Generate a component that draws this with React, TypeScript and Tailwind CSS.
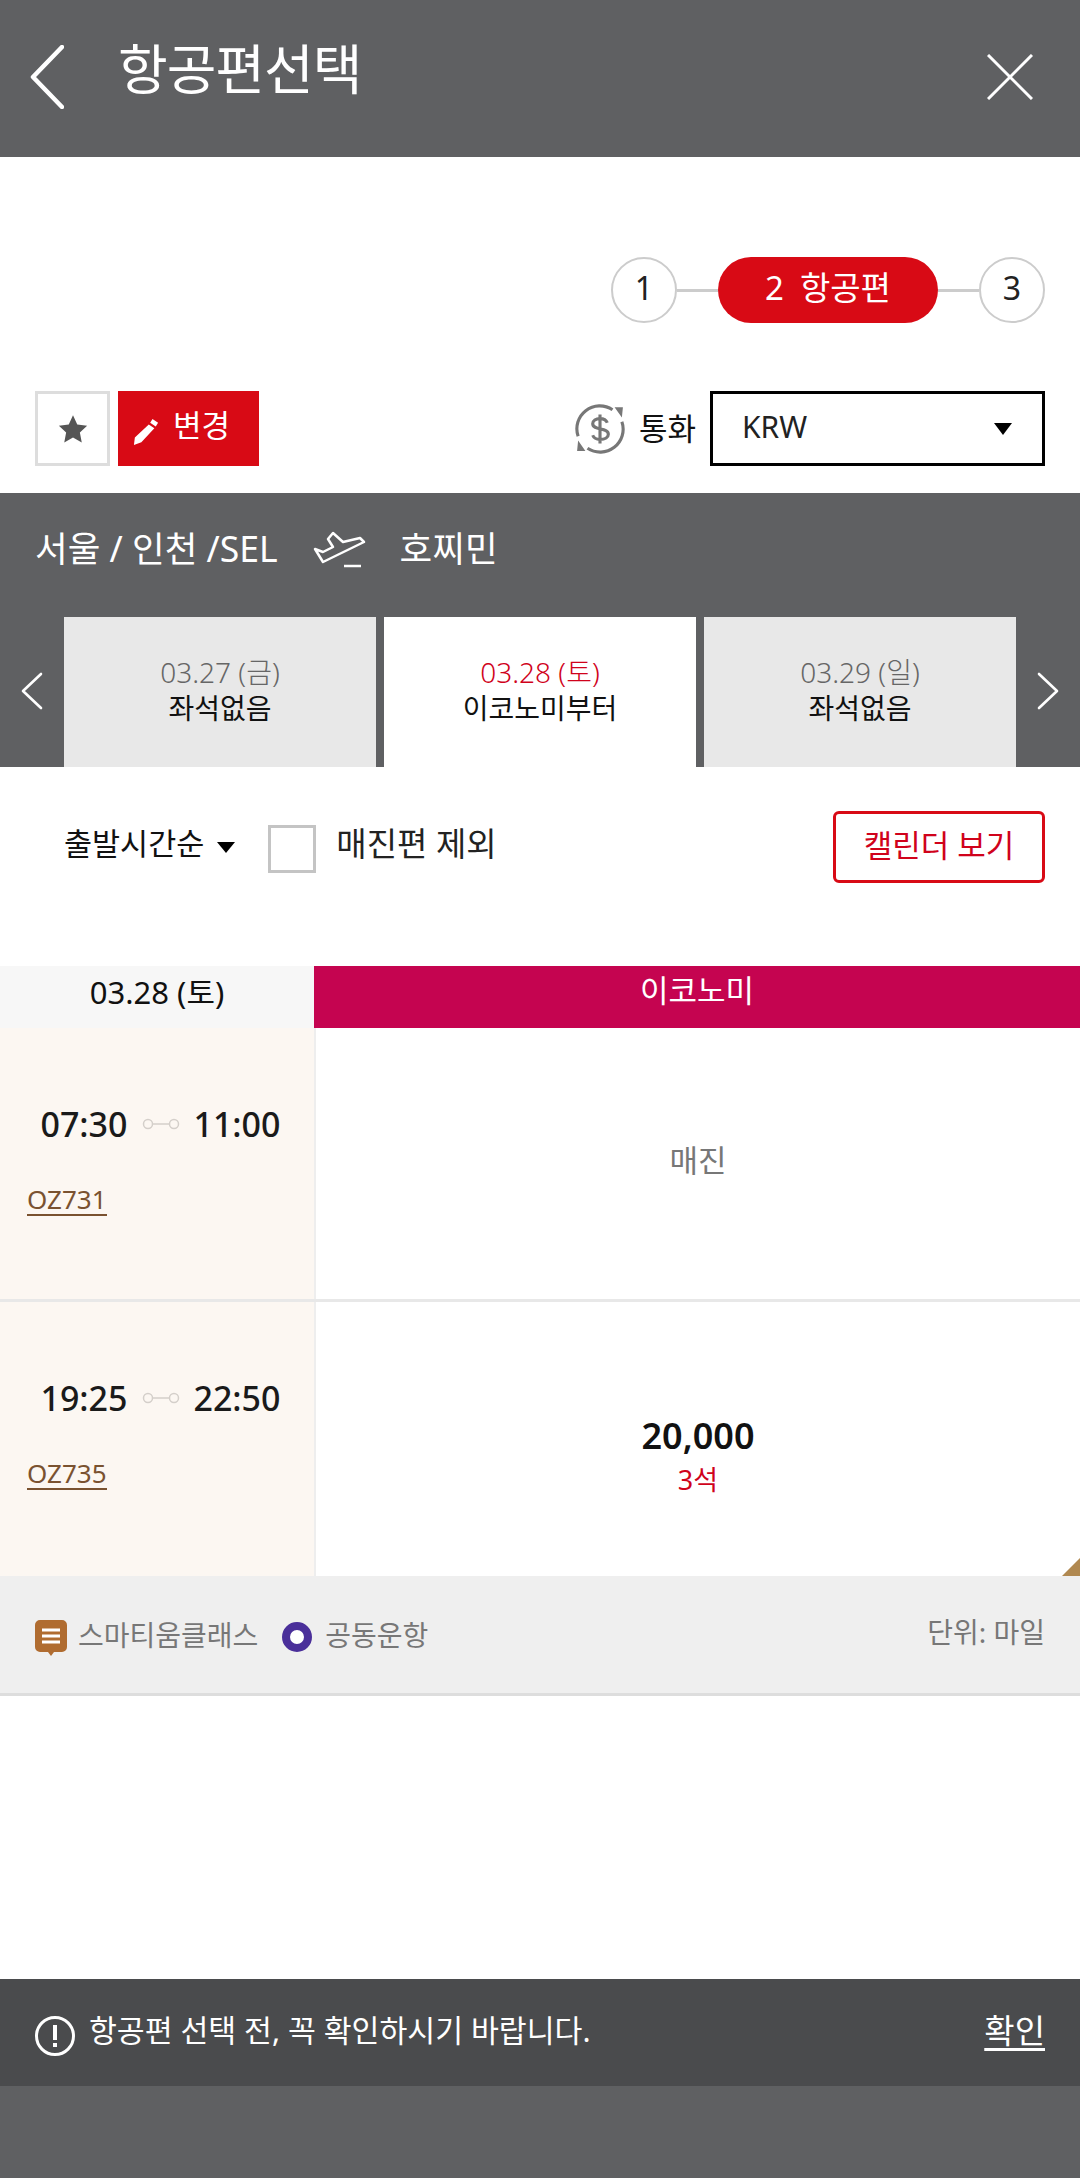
const font = { fontFamily: '"Noto Sans", "Noto Sans CJK KR", sans-serif' }

function Chevron({ dir, className }: { dir: 'left' | 'right'; className: string }) {
  return (
    <svg viewBox="0 0 22 38" className={className} fill="none" stroke="white" strokeWidth="2.6" strokeLinecap="round" strokeLinejoin="round">
      {dir === 'left' ? <path d="M20 2 2 19l18 17" /> : <path d="M2 2l18 17L2 36" />}
    </svg>
  )
}

function DateTab({ date, label, active }: { date: string; label: string; active?: boolean }) {
  return (
    <div className={`flex h-[150px] w-[312px] flex-col items-center pt-[36px] ${active ? 'bg-white' : 'bg-[#e8e8e8]'}`}>
      <div className={`text-[28px] leading-[38px] font-light ${active ? 'text-[#d0021b]' : 'text-[#666666]'}`}>{date}</div>
      <div className="text-[28px] leading-[34px] text-[#111111]">{label}</div>
    </div>
  )
}

function FlightRow({ dep, arr, no, children, border }: { dep: string; arr: string; no: string; children: React.ReactNode; border?: boolean }) {
  return (
    <div className={`flex h-[274px] ${border ? 'border-b-[3px] border-[#e8e8e8]' : ''}`}>
      <div className="flex w-[316px] flex-col border-r-[2px] border-[#eeeeee] bg-[#fcf7f2] pt-[74px]">
        <div className="flex h-[44px] items-center text-[34px] font-medium text-[#1a1a1a]">
          <span className="ml-[34px] flex w-[100px] justify-center">{dep}</span>
          <svg viewBox="0 0 38 14" className="ml-[8px] mr-[7px] h-[14px] w-[38px]" fill="none" stroke="#d4cfca" strokeWidth="1.5">
            <circle cx="6" cy="7" r="4.500" />
            <circle cx="32" cy="7" r="4.500" />
            <path d="M10.500 7h17" />
          </svg>
          <span className="flex w-[100px] justify-center">{arr}</span>
        </div>
        <div className="ml-[27px] mt-[38px] self-start border-b-[2px] border-[#7a5230] text-[26px] leading-[30px] text-[#7a5230]">{no}</div>
      </div>
      <div className="flex flex-1 flex-col items-center justify-center bg-white">{children}</div>
    </div>
  )
}

export default function App() {
  return (
    <div style={font} className="flex h-[2178px] w-[1080px] flex-col overflow-hidden bg-white">
      <header className="flex h-[157px] shrink-0 items-start justify-between bg-[#5f6062]">
        <div className="flex items-start">
          <svg viewBox="0 0 34 64" className="ml-[30px] mt-[45px] h-[64px] w-[34px]" fill="none" stroke="white" strokeWidth="4.500" strokeLinecap="round" strokeLinejoin="round">
            <path d="M32 2 3 32l29 30" />
          </svg>
          <h1 className="ml-[54px] mt-[34px] text-[54px] leading-[70px] tracking-[-1px] text-white">항공편선택</h1>
        </div>
        <svg viewBox="0 0 46 46" className="mr-[47px] mt-[54px] h-[46px] w-[46px]" fill="none" stroke="white" strokeWidth="3">
          <path d="M1 1l44 44M45 1 1 45" />
        </svg>
      </header>

      <div className="flex justify-end pr-[35px] pt-[100px]">
        <div className="flex items-center">
          <div className="flex h-[66px] w-[66px] items-center justify-center rounded-full border-[2px] border-[#cccccc] pb-[4px] text-[32px] text-[#222222]">1</div>
          <div className="h-[3px] w-[41px] bg-[#cccccc]" />
          <div className="flex h-[66px] w-[220px] items-center justify-center gap-[16px] rounded-full bg-[#d80a15] pb-[4px] text-[33px] text-white">
            <span>2</span>
            <span>항공편</span>
          </div>
          <div className="h-[3px] w-[41px] bg-[#cccccc]" />
          <div className="flex h-[66px] w-[66px] items-center justify-center rounded-full border-[2px] border-[#cccccc] pb-[4px] text-[32px] text-[#222222]">3</div>
        </div>
      </div>

      <div className="mt-[68px] flex items-center justify-between pl-[35px] pr-[35px]">
        <div className="flex gap-[8px]">
          <div className="flex h-[75px] w-[75px] items-center justify-center border-[3px] border-[#dddddd]">
            <svg viewBox="0 0 24 24" className="h-[30px] w-[30px]" fill="#555555">
              <path d="M12 1l3.400 7.300 7.900 1-5.800 5.400 1.500 8L12 18.800l-7 3.900 1.500-8L.7 9.300l7.900-1z" />
            </svg>
          </div>
          <div className="flex h-[75px] w-[141px] items-center bg-[#d80a15] pb-[6px] pl-[15px] text-[31px] text-white">
            <svg viewBox="0 0 28 30" className="mt-[12px] h-[30px] w-[26px]" fill="white">
              <path d="M21 1l6 4-2.500 4-6-4zM17 7l6 4L9 26l-8 3 1-8z" />
            </svg>
            <span className="ml-[14px]">변경</span>
          </div>
        </div>
        <div className="flex items-center">
          <svg viewBox="0 0 48 48" className="h-[50px] w-[50px]" fill="none" stroke="#777777" strokeWidth="3">
            <path d="M3 31A22 22 0 0 1 36 5.500M45 17A22 22 0 0 1 12 42.500" />
            <path d="M38 3h8l-1 10zM10 45H2l1-10z" fill="#777777" stroke="none" />
            <path d="M31 18c-1-2.500-4-4-7-4-4 0-7 2-7 5 0 7 15 3 15 10 0 3-3 5-8 5-3 0-6-1.500-7-4M24 10v28" />
          </svg>
          <span className="ml-[14px] text-[31px] text-[#111111]">통화</span>
          <div className="ml-[14px] flex h-[75px] w-[335px] items-center justify-between border-[3px] border-black pb-[5px] pl-[29px] pr-[30px] text-[30px] text-[#222222]">
            <span>KRW</span>
            <span className="mt-[5px] h-0 w-0 border-x-[9px] border-t-[12px] border-x-transparent border-t-black" />
          </div>
        </div>
      </div>

      <section className="mt-[27px] h-[274px] shrink-0 bg-[#5f6062]">
        <div className="flex h-[124px] items-center pb-[12px] pl-[35px] text-[35.500px] text-white">
          <span>서울 / 인천 /SEL</span>
          <svg viewBox="12 13 54 39" className="ml-[34px] h-[39px] w-[54px]" fill="none" stroke="white" strokeWidth="2.500" strokeLinejoin="round">
            <path d="M15 32l8 3 10-5-5-8 5-6 10 9 17-4 4 4-41 20z" />
            <path d="M44 49h17" />
          </svg>
          <span className="ml-[34px]">호찌민</span>
        </div>
        <div className="flex items-start">
          <div className="flex h-[150px] w-[64px] items-center justify-center">
            <Chevron dir="left" className="mb-[2px] h-[38px] w-[22px]" />
          </div>
          <div className="flex gap-[8px]">
            <DateTab date="03.27 (금)" label="좌석없음" />
            <DateTab date="03.28 (토)" label="이코노미부터" active />
            <DateTab date="03.29 (일)" label="좌석없음" />
          </div>
          <div className="flex h-[150px] flex-1 items-center justify-center">
            <Chevron dir="right" className="mb-[2px] h-[38px] w-[22px]" />
          </div>
        </div>
      </section>

      <div className="mt-[44px] flex h-[72px] shrink-0 items-center pl-[64px] pr-[35px]">
        <span className="mb-[6px] text-[30.500px] text-[#111111]">출발시간순</span>
        <span className="ml-[13px] h-0 w-0 border-x-[9px] border-t-[11px] border-x-transparent border-t-black" />
        <span className="ml-[33px] mt-[4px] h-[48px] w-[48px] border-[3px] border-[#c4c4c4]" />
        <span className="mb-[6px] ml-[20px] text-[33px] text-[#222222]">매진편 제외</span>
        <button className="ml-auto h-[72px] w-[212px] rounded-[6px] border-[3px] border-[#d80a15] pb-[3px] text-[31px] text-[#d0021b]">캘린더 보기</button>
      </div>

      <div className="mt-[83px] flex h-[62px] shrink-0">
        <div className="flex w-[314px] justify-center bg-[#f7f7f7] pt-[4px] text-[31px] leading-[44px] text-[#111111]">03.28 (토)</div>
        <div className="flex flex-1 justify-center bg-[#c50450] pt-[2px] text-[31px] leading-[44px] text-white">이코노미</div>
      </div>

      <FlightRow dep="07:30" arr="11:00" no="OZ731" border>
        <span className="mb-[6px] text-[31px] text-[#777777]">매진</span>
      </FlightRow>
      <div className="relative">
        <FlightRow dep="19:25" arr="22:50" no="OZ735">
          <span className="mt-[36px] text-[36px] leading-[46px] font-semibold text-[#111111]">20,000</span>
          <span className="text-[27px] leading-[42px] text-[#d0021b]">3석</span>
        </FlightRow>
        <span className="absolute bottom-0 right-0 h-0 w-0 border-b-[18px] border-l-[18px] border-b-[#b08850] border-l-transparent" />
      </div>

      <div className="flex h-[120px] shrink-0 items-center border-b-[3px] border-[#dddddd] bg-[#efefef] pl-[35px] pr-[35px]">
        <svg viewBox="0 0 32 36" className="mt-[6px] h-[36px] w-[32px]">
          <path d="M5 0h22a5 5 0 0 1 5 5v22a5 5 0 0 1-5 5h-8l-3 4-3-4H5a5 5 0 0 1-5-5V5a5 5 0 0 1 5-5z" fill="#b06c30" />
          <path d="M7 10h18M7 16h18M7 22h18" stroke="white" strokeWidth="3" />
        </svg>
        <span className="ml-[11px] text-[28px] text-[#777777]">스마티움클래스</span>
        <span className="ml-[24px] mt-[4px] h-[30px] w-[30px] rounded-full border-[8px] border-[#4a2f9a] bg-white" />
        <span className="ml-[13px] text-[28px] text-[#777777]">공동운항</span>
        <span className="mb-[6px] ml-auto text-[28px] text-[#777777]">단위: 마일</span>
      </div>

      <div className="flex-1" />

      <div className="flex h-[107px] shrink-0 items-center justify-between bg-[#4a4b4d] pl-[35px] pr-[35px]">
        <div className="flex items-center">
          <svg viewBox="0 0 40 40" className="mt-[6px] h-[40px] w-[40px]" fill="none" stroke="white" strokeWidth="3">
            <circle cx="20" cy="20" r="18.500" />
            <path d="M20 9v15M20 27v4" strokeWidth="4" />
          </svg>
          <span className="mb-[4px] ml-[14px] text-[30.300px] text-white">항공편 선택 전, 꼭 확인하시기 바랍니다.</span>
        </div>
        <span className="mb-[4px] text-[33px] text-white underline underline-offset-[5px]">확인</span>
      </div>
      <div className="h-[92px] shrink-0 bg-[#5f6062]" />
    </div>
  )
}
